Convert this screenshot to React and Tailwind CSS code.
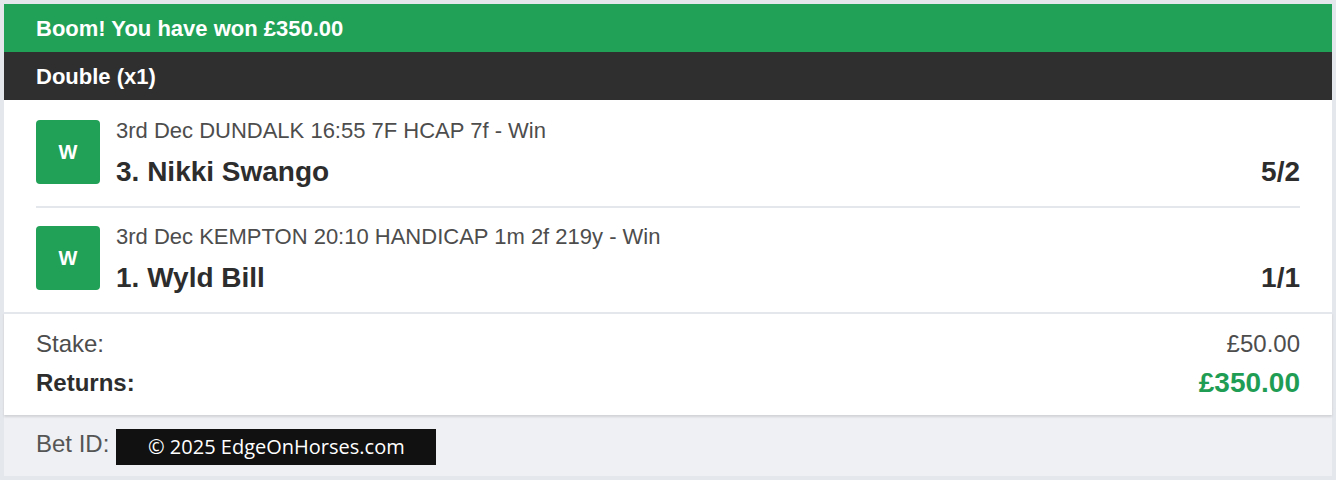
import React from "react";

const legs = [
  { meta: "3rd Dec DUNDALK 16:55 7F HCAP 7f - Win", name: "3. Nikki Swango", odds: "5/2", pt: "pt-[20px]" },
  { meta: "3rd Dec KEMPTON 20:10 HANDICAP 1m 2f 219y - Win", name: "1. Wyld Bill", odds: "1/1", pt: "pt-[18px]" },
];

function Leg({ leg, last }) {
  return (
    <div className={`flex gap-4 ${leg.pt} pb-[18px] ${last ? "" : "border-b-2 border-[#e4e7eb]"}`}>
      <div className="w-16 h-16 shrink-0 rounded-[4px] bg-[#21a157] flex items-center justify-center text-white font-bold text-[20px]">
        W
      </div>
      <div className="flex-1 flex flex-col">
        <div className="text-[22px] leading-[22px] text-[#4d4d4d]">{leg.meta}</div>
        <div className="mt-[14px] flex justify-between items-center leading-[32px] font-bold text-[28px] text-[#2d2d2d]">
          <span>{leg.name}</span>
          <span>{leg.odds}</span>
        </div>
      </div>
    </div>
  );
}

export default function App() {
  return (
    <div className="w-[1336px] h-[480px] bg-[#e4e7eb] p-1" style={{ fontFamily: '"Liberation Sans", Arial, sans-serif' }}>
      <div className="h-full flex flex-col bg-white">
        <div className="h-12 bg-[#21a157] flex items-center px-8 text-white font-bold text-[22px]">
          Boom! You have won £350.00
        </div>
        <div className="h-12 bg-[#2f2f2f] flex items-center px-8 text-white font-bold text-[22px]">
          Double (x1)
        </div>
        <div className="px-8">
          {legs.map((l, i) => (
            <Leg key={i} leg={l} last={i === legs.length - 1} />
          ))}
        </div>
        <div className="border-t-2 border-[#e4e7eb] px-8 pt-[14px] pb-[16px] shadow-[0_2px_2px_rgba(0,0,0,0.12)] relative">
          <div className="flex justify-between leading-[32px] text-[24px] text-[#4d4d4d]">
            <span>Stake:</span>
            <span>£50.00</span>
          </div>
          <div className="mt-[7px] flex justify-between items-center leading-[32px]">
            <span className="text-[24px] font-bold text-[#2d2d2d]">Returns:</span>
            <span className="text-[28px] font-bold text-[#1f9d55]">£350.00</span>
          </div>
        </div>
        <div className="flex-1 bg-[#eef0f4] px-8 pt-[14px] flex items-start gap-[7px]">
          <span className="text-[24px] leading-[32px] text-[#555555] -mt-[1px]">Bet ID:</span>
          <div
            className="w-[320px] h-9 bg-[#111111] text-white text-[20px] flex items-center justify-center"
            style={{ fontFamily: '"Open Sans", sans-serif' }}
          >
            © 2025 EdgeOnHorses.com
          </div>
        </div>
      </div>
    </div>
  );
}
